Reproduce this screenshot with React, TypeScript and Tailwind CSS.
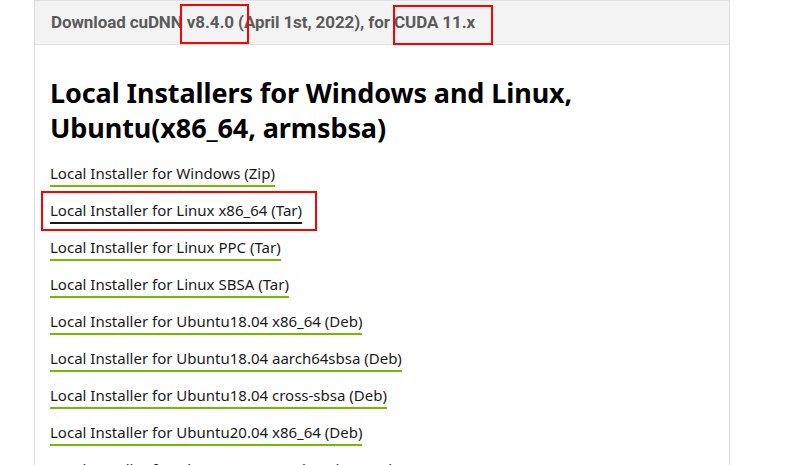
import React from "react";

const links = [
  "Local Installer for Windows (Zip)",
  "Local Installer for Linux x86_64 (Tar)",
  "Local Installer for Linux PPC (Tar)",
  "Local Installer for Linux SBSA (Tar)",
  "Local Installer for Ubuntu18.04 x86_64 (Deb)",
  "Local Installer for Ubuntu18.04 aarch64sbsa (Deb)",
  "Local Installer for Ubuntu18.04 cross-sbsa (Deb)",
  "Local Installer for Ubuntu20.04 x86_64 (Deb)",
  "Local Installer for Ubuntu20.04 aarch64sbsa (Deb)",
];

export default function App() {
  return (
    <div className="relative w-[797px] h-[465px] overflow-hidden bg-white">
      <div className="ml-[34px] w-[696px] h-full border-x border-[#dcdcdc]">
        <div
          className="h-[45px] bg-[#f3f3f3] border-y border-[#e0e0e0] flex items-center pl-[16px] text-[17px] font-bold text-[#5b5b5b] tracking-[-0.1px]"
          style={{ fontFamily: "Roboto, sans-serif" }}
        >
          Download cuDNN v8.4.0 (April 1st, 2022), for CUDA 11.x
        </div>
        <div className="pl-[15px] pt-[30px]" style={{ fontFamily: "'Noto Sans', sans-serif" }}>
          <h2 className="flex flex-col text-[27px] leading-[35px] font-bold text-black tracking-[-0.1px]">
            <span>Local Installers for Windows and Linux,</span>
            <span>Ubuntu(x86_64, armsbsa)</span>
          </h2>
          <div className="mt-[17px] flex flex-col gap-[12px]">
            {links.map((l, i) => (
              <div key={l} className="flex">
                <span
                  className={
                    "text-[15px] leading-[22px] text-[#1a1a1a] border-b-2 pb-[1px] " +
                    (i === 1 ? "border-[#1a1a1a]" : "border-[#76b900]")
                  }
                >
                  {l}
                </span>
              </div>
            ))}
          </div>
        </div>
      </div>
      <div className="absolute left-[180px] top-[4px] w-[69px] h-[40px] border-2 border-[#ff0000]" />
      <div className="absolute left-[393px] top-[5px] w-[100px] h-[40px] border-2 border-[#ff0000]" />
      <div className="absolute left-[41px] top-[191px] w-[276px] h-[40px] border-2 border-[#ff0000]" />
    </div>
  );
}
